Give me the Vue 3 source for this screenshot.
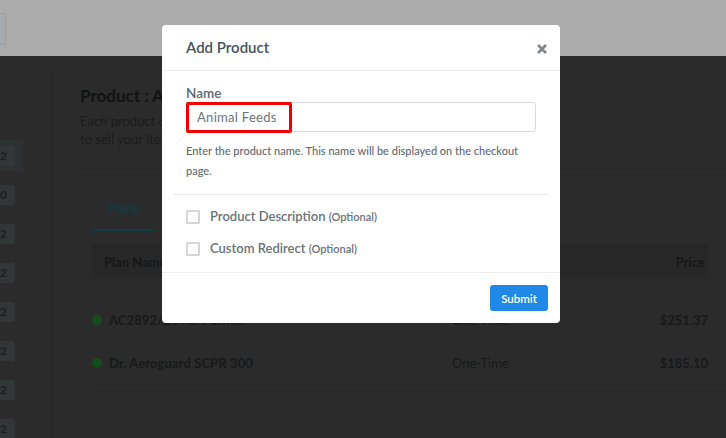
<template>
  <div class="page">
    <header class="topbar">
      <div class="top-btn"></div>
    </header>
    <div class="body-row">
      <aside class="sidebar">
        <div class="side-rule"></div>
        <div
          v-for="(item, i) in sideCounts"
          :key="i"
          class="side-row"
          :class="{ active: i === 0 }"
        >
          <span class="count">{{ item }}</span>
        </div>
      </aside>
      <main class="content">
        <h2 class="product-title">Product : Animal Feeds</h2>
        <p class="product-sub">Each product can have multiple plans. Create a plan<br />to sell your items on the checkout page.</p>
        <div class="tabs">
          <span class="tab">Plans</span>
        </div>
        <div class="table-head">
          <span>Plan Name</span>
          <span>Price</span>
        </div>
        <div v-for="plan in plans" :key="plan.name" class="plan-row">
          <span class="dot"></span>
          <span class="plan-name">{{ plan.name }}</span>
          <span class="plan-type">One-Time</span>
          <span class="plan-price">{{ plan.price }}</span>
        </div>
      </main>
    </div>

    <div class="modal" role="dialog" aria-modal="true">
      <div class="modal-header">
        <h3>Add Product</h3>
        <svg class="close" width="10" height="10" viewBox="0 0 10 10">
          <path d="M1 1 9 9M9 1 1 9" stroke="#7d868c" stroke-width="2.6" fill="none" />
        </svg>
      </div>
      <div class="modal-body">
        <label class="name-label" for="name">Name</label>
        <div class="input-wrap">
          <input id="name" v-model="name" type="text" />
          <div class="highlight"></div>
        </div>
        <p class="help">Enter the product name. This name will be displayed on the checkout page.</p>
      </div>
      <div class="options">
        <div v-for="opt in options" :key="opt" class="option">
          <span class="box"></span>
          <span class="opt-label">{{ opt }} <small>(Optional)</small></span>
        </div>
      </div>
      <div class="modal-footer">
        <button type="button" class="submit">Submit</button>
      </div>
    </div>
  </div>
</template>

<script setup>
import { ref } from 'vue';

const name = ref('Animal Feeds');
const sideCounts = ['2', '0', '2', '2', '2', '2', '2', '2'];
const options = ['Product Description', 'Custom Redirect'];
const plans = [
  { name: 'AC2892/20 Air Purifier', price: '$251.37' },
  { name: 'Dr. Aeroguard SCPR 300', price: '$185.10' },
];
</script>

<style>
html, body { margin: 0; background: #2b2b2b; overflow: hidden; }
</style>

<style scoped>
.page {
  position: relative;
  width: 726px;
  height: 438px;
  overflow: hidden;
  background: #2b2b2b;
  font-family: Lato, "Open Sans", sans-serif;
}
.topbar {
  height: 56px;
  background: #ababab;
  padding-top: 13px;
  box-sizing: border-box;
}
.top-btn {
  width: 5px;
  height: 30px;
  background: #a6acb0;
  border: 1px solid #9aa0a4;
  border-left: none;
  border-radius: 0 3px 3px 0;
}
.body-row { display: flex; }
.sidebar {
  width: 51px;
  height: 370px;
  margin-top: 12px;
  border-right: 1px solid #272727;
  flex-shrink: 0;
}
.side-rule {
  width: 23px;
  height: 1px;
  background: #272727;
  margin-top: 55px;
  margin-bottom: 16px;
}
.side-row {
  width: 23px;
  height: 31px;
  margin-bottom: 8px;
  display: flex;
  align-items: center;
}
.side-row.active { background: #2e3131; }
.count {
  width: 15px;
  height: 20px;
  background: #323636;
  border-radius: 0 3px 3px 0;
  color: #1c1f20;
  font-size: 12px;
  font-weight: 700;
  line-height: 20px;
  text-align: right;
  box-sizing: border-box;
  padding-right: 8px;
}
.content {
  flex: 1;
  padding: 30px 18px 0 28px;
  min-width: 0;
}
.product-title {
  margin: 0;
  font-size: 17px;
  line-height: 20px;
  font-weight: 700;
  color: #111213;
  white-space: nowrap;
}
.product-sub {
  margin: 6px 0 0;
  font-size: 13px;
  line-height: 18px;
  color: #1a1c1d;
  white-space: nowrap;
}
.tabs {
  margin: 26px -18px 0 0;
  padding: 0 0 0 12px;
  border-top: 1px solid #272727;
  height: 56px;
  box-sizing: border-box;
}
.tab {
  display: block;
  width: 63px;
  height: 56px;
  box-sizing: border-box;
  border-bottom: 2px solid #123c44;
  text-align: center;
  font-size: 13px;
  font-weight: 700;
  color: #123c44;
  line-height: 66px;
}
.table-head {
  margin: 14px 0 0 12px;
  height: 35px;
  background: #272727;
  display: flex;
  justify-content: space-between;
  align-items: center;
  padding: 0 3px 0 12px;
  font-size: 13px;
  font-weight: 700;
  color: #161718;
}
.plan-row {
  margin: 0 -18px 0 12px;
  height: 44px;
  display: flex;
  align-items: center;
  border-bottom: 1px solid #272727;
  font-size: 13px;
  font-weight: 700;
  color: #17191a;
  padding-right: 18px;
  box-sizing: border-box;
}
.table-head + .plan-row { height: 62px; padding-top: 21px; }
.dot {
  width: 10px;
  height: 10px;
  border-radius: 50%;
  background: #144d1b;
  margin-right: 7px;
  flex-shrink: 0;
}
.plan-name { width: 343px; white-space: nowrap; letter-spacing: 0.1px; }
.plan-type { font-weight: 400; flex: 1; }
.modal {
  position: absolute;
  left: 162px;
  top: 25px;
  width: 398px;
  height: 298px;
  background: #fff;
  border-radius: 4px;
  color: #5b666e;
}
.modal-header {
  height: 46px;
  box-sizing: border-box;
  border-bottom: 1px solid #e9ecee;
  padding: 0 13px 0 24px;
  display: flex;
  align-items: center;
  justify-content: space-between;
}
.modal-header h3 {
  margin: 0 0 2px;
  font-size: 15px;
  font-weight: 600;
  color: #46535c;
}
.close { margin-top: 2px; }
.modal-body { padding: 14px 24px 0; height: 123px; box-sizing: border-box; }
.name-label {
  display: block;
  font-size: 13.5px;
  line-height: 17px;
  font-weight: 600;
  color: #5b666e;
}
.input-wrap { position: relative; }
input {
  display: block;
  width: 100%;
  height: 30px;
  box-sizing: border-box;
  border: 1px solid #d8dbdd;
  border-radius: 3px;
  padding: 0 10px;
  font: 400 13px Lato, sans-serif;
  letter-spacing: 0.3px;
  color: #6b757c;
  outline: none;
}
.highlight {
  position: absolute;
  left: 0;
  top: 0;
  width: 106px;
  height: 31px;
  box-sizing: border-box;
  border: 3px solid #f00000;
  border-radius: 2px;
}
.help {
  margin: 9px 0 0;
  font-size: 11px;
  line-height: 20px;
  font-weight: 500;
  color: #5f6a71;
}
.options {
  margin: 0 12px;
  border-top: 1px solid #e5e7e9;
  height: 78px;
  box-sizing: border-box;
  padding: 15px 12px 0;
}
.option {
  display: flex;
  align-items: center;
  height: 14px;
  margin-bottom: 18px;
}
.box {
  width: 14px;
  height: 14px;
  box-sizing: border-box;
  border: 2px solid #d4d6d8;
  border-radius: 1px;
  margin-right: 10px;
  flex-shrink: 0;
}
.opt-label {
  font-size: 13px;
  font-weight: 600;
  color: #68737a;
  white-space: nowrap;
  position: relative;
  top: -1px;
}
.opt-label small { font-size: 11px; font-weight: 600; }
.modal-footer {
  border-top: 1px solid #eceef0;
  padding: 12px 12px 0;
  display: flex;
  justify-content: flex-end;
}
.submit {
  width: 58px;
  height: 26px;
  border: none;
  border-radius: 3px;
  background: #2088e6;
  color: #fff;
  font: 600 11.5px Lato, sans-serif;
  padding: 0;
}
</style>
